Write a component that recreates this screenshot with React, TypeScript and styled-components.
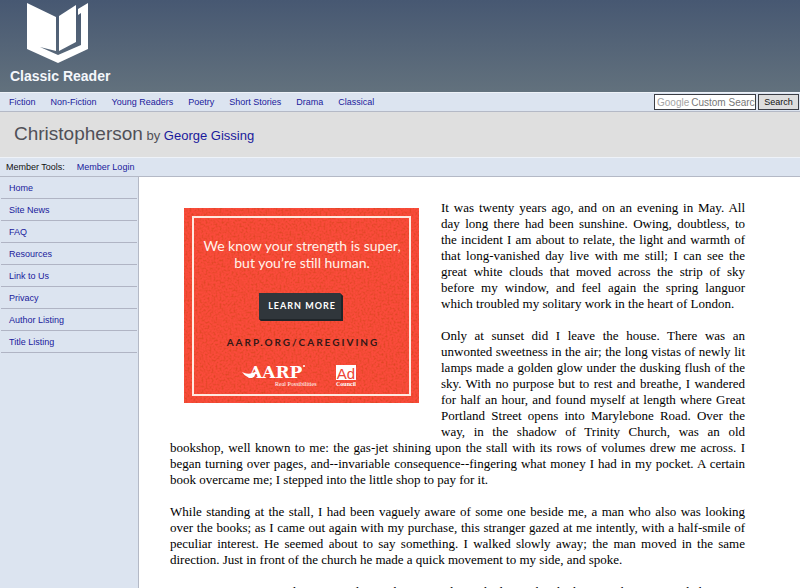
import React from "react";
import styled, { createGlobalStyle } from "styled-components";

const GlobalStyle = createGlobalStyle`
  * { box-sizing: border-box; }
  body { margin: 0; background: #fff; font-family: "Liberation Sans", Arial, sans-serif; }
  #root { height: 100vh; overflow: hidden; }
  a { color: #1a1a9c; text-decoration: none; }
`;

const Page = styled.div`
  min-height: 100vh;
  display: flex;
  flex-direction: column;
`;
const Banner = styled.header`
  height: 92px;
  padding: 3px 0 0 10px;
  background: linear-gradient(#475872, #62717d);
`;
const Brand = styled.a`
  display: inline-flex;
  flex-direction: column;
  color: #f4f7fb;
  font-size: 14px;
  line-height: 16px;
  font-weight: bold;
  svg { margin: 0 0 3px 17px; }
`;
const Bar = styled.nav`
  display: flex;
  align-items: center;
  height: 20px;
  background: #dce4f0;
  border-top: 1px solid #eef2f8;
  border-bottom: 1px solid #b4b9c6;
  font-size: 9px;
`;
const Categories = styled.div`
  display: flex;
  flex: 1;
  gap: 15px;
  padding-left: 9px;
`;
const SearchForm = styled.form`
  display: flex;
  gap: 2px;
  padding-right: 1px;
`;
const SearchField = styled.label`
  display: flex;
  align-items: center;
  width: 102px;
  height: 16px;
  padding-left: 2px;
  border: 1px solid #3b3d44;
  background: #fff;
  color: #a4a4a4;
  font-size: 10px;
`;
const SearchInput = styled.input`
  min-width: 0;
  flex: 1;
  height: 12px;
  margin-left: 2px;
  padding: 0;
  border: 0;
  background: transparent;
  font: 10px "Liberation Sans", Arial, sans-serif;
  &::placeholder { color: #777; opacity: 1; }
`;
const SearchButton = styled.button`
  width: 41px;
  height: 16px;
  padding: 0;
  border: 1px solid #3b3d44;
  background: #dedede;
  color: #111;
  font: 9px "Liberation Sans", Arial, sans-serif;
`;
const TitleBar = styled.div`
  height: 45px;
  padding: 10px 14px;
  background: #dfdfdf;
  color: #505058;
  font-size: 13px;
  line-height: 24px;
`;
const Title = styled.h1`
  display: inline;
  margin: 0;
  font-size: 19px;
  font-weight: normal;
`;
const MemberLabel = styled.span`
  padding: 0 12px 0 6px;
  color: #111;
`;
const Columns = styled.div`
  display: flex;
  flex: 1;
`;
const Sidebar = styled.nav`
  flex: 0 0 139px;
  padding: 0 1px;
  background: #dce4f0;
  border-right: 1px solid #b4b9c6;
`;
const SideLink = styled.a`
  display: block;
  height: 22px;
  padding-left: 8px;
  border-bottom: 1px solid #b0b4c4;
  font-size: 9px;
  line-height: 22px;
`;
const Story = styled.main`
  flex: 1;
  min-width: 0;
  padding: 23px 55px 0 31px;
  font: 13px/16px "Liberation Serif", "Times New Roman", serif;
  color: #000;
  text-align: justify;
`;
const Paragraph = styled.p`
  margin: 0 0 16px;
`;
const Ad = styled.a`
  float: left;
  margin: 8px 22px 32px 14px;
  svg { display: block; }
`;

const categories = ["Fiction", "Non-Fiction", "Young Readers", "Poetry", "Short Stories", "Drama", "Classical"];
const sections = ["Home", "Site News", "FAQ", "Resources", "Link to Us", "Privacy", "Author Listing", "Title Listing"];

function BookLogo() {
  return (
    <svg width="62" height="62" viewBox="0 0 62 62" fill="#fff" aria-hidden="true">
      <path d="M0 0 29 14V48L13 44 31 52 54 42V10L51 12V6L61 0V46L31 60 0 46Z" />
      <path d="M32 13 49 2V39L32 48Z" />
    </svg>
  );
}

function AdArt() {
  return (
    <svg width="235" height="195" viewBox="0 0 235 195" role="img" aria-label="AARP caregiving">
      <defs>
        <filter id="grain" x="0" y="0" width="100%" height="100%">
          <feTurbulence type="fractalNoise" baseFrequency="0.5" numOctaves="2" seed="4" />
          <feColorMatrix values="0 0 0 0 0.45  0 0 0 0 0.05  0 0 0 0 0  1 0 0 0 -0.42" />
        </filter>
      </defs>
      <rect width="235" height="195" fill="#fa4b3b" />
      <rect width="235" height="195" filter="url(#grain)" />
      <rect x="9" y="9" width="217" height="178" fill="none" stroke="#ffe9e0" strokeWidth="2" />
      <g fill="#fff3ec" fontFamily="Lato, sans-serif" fontSize="14" textAnchor="middle">
        <text x="118" y="43">We know your strength is super,</text>
        <text x="118" y="60">but you’re still human.</text>
      </g>
      <path d="M75 85H156L159 88V113H77L75 111Z" fill="#30363b" />
      <path d="M156 85 159 88V113H77L75 111H157V87Z" fill="#202529" />
      <text x="118" y="101" fill="#fff" fontFamily="Lato, sans-serif" fontWeight="bold" fontSize="9" letterSpacing="1" textAnchor="middle">LEARN MORE</text>
      <text x="119" y="138" fill="#321817" fontFamily="Lato, sans-serif" fontWeight="bold" fontSize="10" letterSpacing="2" textAnchor="middle">AARP.ORG/CAREGIVING</text>
      <g fill="#fff">
        <path d="M58 164Q65 168 73 163L70 169Q64 172 58 164Z" />
        <text x="65" y="170" fontFamily="DejaVu Serif, serif" fontWeight="bold" fontSize="17">AARP</text>
        <text x="91" y="178" fontFamily="Liberation Serif, serif" fontSize="6">Real Possibilities</text>
        <circle cx="120" cy="158" r="1" />
        <rect x="152" y="157" width="20" height="15" />
        <text x="162" y="178" textAnchor="middle" fontFamily="Liberation Serif, serif" fontWeight="bold" fontSize="6">Council</text>
      </g>
      <text x="162" y="171" fill="#ee4434" textAnchor="middle" fontFamily="Liberation Sans, sans-serif" fontSize="15">Ad</text>
    </svg>
  );
}

export default function App() {
  return (
    <>
      <GlobalStyle />
      <Page>
        <Banner><Brand href="#"><BookLogo />Classic Reader</Brand></Banner>
        <Bar aria-label="Categories">
          <Categories>{categories.map((name) => <a href="#" key={name}>{name}</a>)}</Categories>
          <SearchForm onSubmit={(event) => event.preventDefault()}>
            <SearchField>Google<SearchInput aria-label="Google Custom Search" placeholder="Custom Search" /></SearchField>
            <SearchButton>Search</SearchButton>
          </SearchForm>
        </Bar>
        <TitleBar><Title>Christopherson</Title> by <a href="#">George Gissing</a></TitleBar>
        <Bar aria-label="Member tools"><MemberLabel>Member Tools:</MemberLabel><a href="#">Member Login</a></Bar>
        <Columns>
          <Sidebar aria-label="Site">{sections.map((name) => <SideLink href="#" key={name}>{name}</SideLink>)}</Sidebar>
          <Story>
            <Ad href="#"><AdArt /></Ad>
            <Paragraph>It was twenty years ago, and on an evening in May. All day long there had been sunshine. Owing, doubtless, to the incident I am about to relate, the light and warmth of that long-vanished day live with me still; I can see the great white clouds that moved across the strip of sky before my window, and feel again the spring languor which troubled my solitary work in the heart of London.</Paragraph>
            <Paragraph>Only at sunset did I leave the house. There was an unwonted sweetness in the air; the long vistas of newly lit lamps made a golden glow under the dusking flush of the sky. With no purpose but to rest and breathe, I wandered for half an hour, and found myself at length where Great Portland Street opens into Marylebone Road. Over the way, in the shadow of Trinity Church, was an old bookshop, well known to me: the gas-jet shining upon the stall with its rows of volumes drew me across. I began turning over pages, and--invariable consequence--fingering what money I had in my pocket. A certain book overcame me; I stepped into the little shop to pay for it.</Paragraph>
            <Paragraph>While standing at the stall, I had been vaguely aware of some one beside me, a man who also was looking over the books; as I came out again with my purchase, this stranger gazed at me intently, with a half-smile of peculiar interest. He seemed about to say something. I walked slowly away; the man moved in the same direction. Just in front of the church he made a quick movement to my side, and spoke.</Paragraph>
            <Paragraph>'Pray excuse me, sir--don't misunderstand me--I only wished to ask whether you have noticed the name written on the flyleaf of the book you have just bought?'</Paragraph>
          </Story>
        </Columns>
      </Page>
    </>
  );
}
